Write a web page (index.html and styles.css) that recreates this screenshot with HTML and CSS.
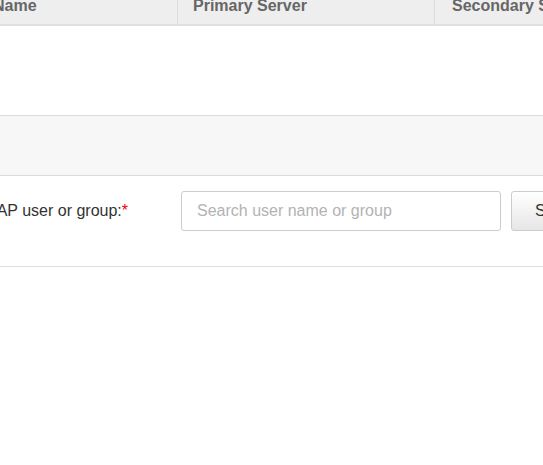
FILE: index.html
```html
<!DOCTYPE html>
<html>
<head>
<meta charset="utf-8">
<link rel="stylesheet" href="styles.css">
</head>
<body>
<div class="page">
  <div class="table-head">
    <div class="th th-name">Name</div>
    <div class="th th-primary">Primary Server</div>
    <div class="th th-secondary">Secondary Server</div>
  </div>
  <div class="table-body"></div>
  <div class="toolbar"></div>
  <div class="form-row">
    <label class="form-label">LDAP user or group:<span class="req">*</span></label>
    <input class="search-input" type="text" placeholder="Search user name or group">
    <button class="btn">Search</button>
  </div>
</div>
</body>
</html>
```
FILE: styles.css
```css
html, body {
  margin: 0;
  padding: 0;
  background: #fff;
  overflow: hidden;
}
.page {
  font-family: "Liberation Sans", Arial, sans-serif;
  width: 543px;
  overflow: hidden;
}
.table-head {
  display: flex;
  margin-top: -8px;
  margin-left: -23px;
  background: #eeeeee;
  border-bottom: 2px solid #e0e0e0;
  width: 800px;
}
.th {
  padding: 4px 16px 8px;
  line-height: 20px;
  font-size: 16px;
  font-weight: bold;
  color: #666;
  box-sizing: border-box;
  white-space: nowrap;
}
.th-name { width: 200px; }
.th-primary { width: 257px; border-left: 1px solid #dcdcdc; padding-left: 15px; }
.th-secondary { width: 300px; border-left: 1px solid #dcdcdc; padding-left: 17px; }
.table-body {
  height: 89px;
}
.toolbar {
  height: 59px;
  background: #f7f7f7;
  border-top: 1px solid #dcdcdc;
  border-bottom: 1px solid #dcdcdc;
}
.form-row {
  display: flex;
  align-items: center;
  padding: 15px 0 35px;
  margin-left: -60px;
  border-bottom: 1px solid #dddddd;
  width: 800px;
}
.form-label {
  width: 188px;
  text-align: right;
  font-size: 16px;
  color: #333;
  margin-right: 53px;
  white-space: nowrap;
}
.req { color: #e00; }
.search-input {
  width: 320px;
  height: 40px;
  box-sizing: border-box;
  border: 1px solid #cccccc;
  border-radius: 3px;
  padding: 0 15px;
  font-family: "Liberation Sans", Arial, sans-serif;
  font-size: 16px;
  color: #333;
  margin: 0;
}
.search-input::placeholder { color: #b3b3b3; }
.btn {
  margin-left: 10px;
  height: 40px;
  padding: 0 23px;
  border: 1px solid #cccccc;
  border-radius: 3px;
  background: linear-gradient(#ffffff, #e6e6e6);
  font-family: "Liberation Sans", Arial, sans-serif;
  font-size: 16px;
  color: #333;
}
```
